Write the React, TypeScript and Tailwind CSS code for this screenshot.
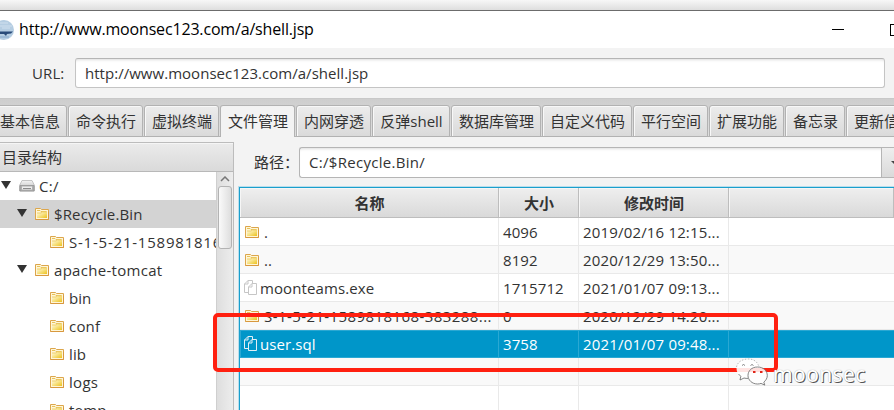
import React from 'react';

const tabs = [
  { label: '基本信息', width: 'w-[76px]' },
  { label: '命令执行', width: 'w-[76px]' },
  { label: '虚拟终端', width: 'w-[76px]' },
  { label: '文件管理', width: 'w-[76px]', active: true },
  { label: '内网穿透', width: 'w-[76px]' },
  { label: '反弹shell', width: 'w-[79px]' },
  { label: '数据库管理', width: 'w-[91px]' },
  { label: '自定义代码', width: 'w-[91px]' },
  { label: '平行空间', width: 'w-[76px]' },
  { label: '扩展功能', width: 'w-[76px]' },
  { label: '备忘录', width: 'w-[61px]' },
  { label: '更新信息', width: 'w-[76px]' },
];

const tree = [
  { label: 'C:/', pad: 'pl-[1px]', open: true, drive: true, text: 'tracking-[0.3px]' },
  { label: '$Recycle.Bin', pad: 'pl-[17px]', open: true, selected: true, text: 'tracking-[0.13px]' },
  { label: 'S-1-5-21-1589818168', pad: 'pl-[50px]', text: 'tracking-[0.78px]' },
  { label: 'apache-tomcat', pad: 'pl-[17px]', open: true, text: 'tracking-[0.3px]' },
  { label: 'bin', pad: 'pl-[50px]', text: '' },
  { label: 'conf', pad: 'pl-[50px]', text: 'tracking-[0.2px]' },
  { label: 'lib', pad: 'pl-[50px]', text: 'tracking-[0.1px]' },
  { label: 'logs', pad: 'pl-[50px]', text: 'tracking-[0.3px]' },
  { label: 'temp', pad: 'pl-[50px]', text: 'tracking-[0.2px]' },
];

const files = [
  { name: '.', size: '4096', date: '2019/02/16 12:15...', folder: true },
  { name: '..', size: '8192', date: '2020/12/29 13:50...', folder: true },
  { name: 'moonteams.exe', size: '1715712', date: '2021/01/07 09:13...' },
  { name: 'S-1-5-21-1589818168-383288...', size: '0', date: '2020/12/29 14:20...', folder: true },
  { name: 'user.sql', size: '3758', date: '2021/01/07 09:48...', selected: true },
  { name: '', size: '', date: '' },
];

function Folder() {
  return (
    <svg width="14" height="12" viewBox="0 0 14 12" className="shrink-0">
      <defs>
        <linearGradient id="folder" x1="0" y1="0" x2="1" y2="1">
          <stop offset="0" stopColor="#fffbe8" />
          <stop offset="0.45" stopColor="#f8e48c" />
          <stop offset="1" stopColor="#ecc21e" />
        </linearGradient>
      </defs>
      <path d="M.5 11.5V.5h5l1 1h7v10z" fill="#fff6d8" stroke="#dca64c" />
      <path d="M2 10V5h4l1.5-1H12v6z" fill="url(#folder)" />
      <path d="M2 2.5h3l1 1h5.5" fill="none" stroke="#e8c258" />
      <path d="M2 5h4l1.5-1H12" fill="none" stroke="#efcf68" />
      <path d="M.5 11.5h13v-8" fill="none" stroke="#d8983e" />
    </svg>
  );
}

function Drive() {
  return (
    <svg width="16" height="12" viewBox="0 0 16 12" className="shrink-0">
      <defs>
        <linearGradient id="drive" x1="0" y1="0" x2="0" y2="1">
          <stop offset="0" stopColor="#f4f4f4" />
          <stop offset="1" stopColor="#b4b4b4" />
        </linearGradient>
      </defs>
      <path d="M3 .5h10l2.500 5v5.500H.5V5.500z" fill="url(#drive)" stroke="#b8b8b8" strokeWidth=".8" />
      <path d="M1 5.500h14V11H1z" fill="#b0b0b0" stroke="#8f8f8f" strokeWidth=".7" />
      <path d="M3 6.500h10v3H3z" fill="#ededed" />
      <path d="M4 8.500h8" stroke="#8a8a8a" />
    </svg>
  );
}

function Pages({ light }: { light?: boolean }) {
  return (
    <svg width="13" height="15" viewBox="0 0 13 15" className="shrink-0" fill="none" stroke={light ? '#e4eff5' : '#c6c6c6'}>
      <path d="M4 12.500H.5V4L4 .5h4.500V3M.5 4H4V.5" />
      <path d="M4.500 14.500V7L8 3.500h4.500v11zM4.500 7H8V3.500" fill={light ? '#0096c9' : '#fff'} />
    </svg>
  );
}

function WeChat() {
  return (
    <svg width="34" height="28" viewBox="0 0 34 28" fill="none" stroke="#666" strokeWidth=".8">
      <path
        d="M13.500 1C6.500 1 1.500 5 1.500 10.500c0 3.300 1.700 6 4.300 7.800L5 22l4-2c1.500.4 2.800.5 4 .4-1.400-5 3-11.400 10.800-11.700C22.500 4 18.500 1 13.500 1z"
        fill="#fff"
        fillOpacity=".88"
        stroke="none"
      />
      <path d="M1.500 9C2.500 4 7 1 13.500 1c5 0 8.500 2.500 10 6.500" stroke="#aaa" strokeDasharray="1.500 1.500" />
      <path d="M3.500 16l2.300 2.300L5 22l4-2c1.500.4 2.800.5 4 .4" />
      <path
        d="M22.500 9C16.500 9 13 13 13 17.500S17 26 22.500 26c1.300 0 2.500-.2 3.500-.6l3.800 1.700-1-3c2-1.500 3.500-4 3.500-6.500C32.300 13 28.500 9 22.500 9z"
        fill="#fff"
        fillOpacity=".86"
      />
      <path d="M7 7.500q1.500-2 3 0M15.500 7.500q1.500-2 3 0" />
      <path d="M18 14h2.500M25 14h2.500" stroke="#e02418" strokeWidth="1.800" />
    </svg>
  );
}

const headCell =
  'flex items-center justify-center border-r border-b border-[#bdbdbd] bg-linear-to-b from-[#efefef] to-[#d9d9d9] pl-px font-bold shadow-[inset_1px_1px_0_#f6f6f6]';

export default function App() {
  return (
    <div className="relative flex h-[410px] w-[894px] flex-col overflow-hidden bg-[#f3f3f3] font-['Open_Sans','Noto_Sans_CJK_SC',sans-serif] text-[15px] leading-5 whitespace-nowrap text-[#333]">
      <div className="h-[11px] shrink-0 border-b border-[#6c6c6c] bg-linear-to-b from-[#f7f7f7] to-[#dedede]" />

      <header className="flex h-[37px] shrink-0 items-center bg-white text-black">
        <svg width="14" height="20" viewBox="0 0 14 20" className="shrink-0">
          <circle cx="4" cy="10" r="10" fill="#b5cde2" />
          <path d="M0 3h8M0 6h12M2 8h8" stroke="#cfdfee" strokeWidth="1.200" />
          <path d="M0 11.500h13l-2 2-4 .5-1 2-2-2H0z" fill="#294b79" />
          <path d="M0 17h9" stroke="#9dbad6" strokeWidth="2" />
        </svg>
        <span className="ml-[5px] pb-px text-[16px] tracking-[-0.17px]">http://www.moonsec123.com/a/shell.jsp</span>
        <div className="mr-[46px] ml-auto h-px w-3 bg-black" />
        <div className="-mr-2 h-3 w-3 shrink-0 border border-black" />
      </header>

      <div className="flex h-[50px] shrink-0 items-center">
        <span className="w-[75px] shrink-0 pl-8 tracking-[0.1px]">URL:</span>
        <div className="flex h-[30px] w-[810px] items-center rounded-[3px] border border-[#c4c4c4] border-t-[#b5b5b5] bg-white pl-[9px] shadow-[inset_0_3px_3px_-2px_#ddd]">
          <span className="tracking-[0.03px]">http://www.moonsec123.com/a/shell.jsp</span>
        </div>
      </div>

      <nav className="flex h-[39px] shrink-0 items-end border-t border-b border-[#b5b5b5] border-t-[#c8c8c8] bg-linear-to-b from-[#cecece] to-[#dedede]">
        <div className="-mb-px -ml-2 flex h-8">
          {tabs.map((tab) => (
            <div key={tab.label} className={`${tab.width} flex shrink-0 pr-px`}>
              <div
                className={`flex flex-1 items-center justify-center rounded-t-[3px] border border-[#b2b2b2] pl-px ${
                  tab.active
                    ? 'border-b-0 bg-[#f3f3f3] pb-px'
                    : 'bg-linear-to-b from-[#ececec] to-[#dadada] shadow-[inset_1px_1px_0_#f8f8f8]'
                }`}
              >
                {tab.label}
              </div>
            </div>
          ))}
        </div>
      </nav>

      <main className="flex min-h-0 flex-1">
        <aside className="mt-[5px] flex w-[234px] shrink-0 flex-col border-t border-r border-[#bcbcbc]">
          <div className="flex h-[29px] shrink-0 items-center border-b border-[#b8b8b8] bg-linear-to-b from-[#ebebeb] to-[#dadada] pb-px pl-[2px] shadow-[inset_0_1px_0_#f5f5f5]">
            目录结构
          </div>
          <div className="flex min-h-0 flex-1">
            <div className="min-w-0 flex-1 overflow-hidden bg-white">
              {tree.map((node) => (
                <div
                  key={node.label}
                  className={`flex h-7 items-center ${node.pad} ${node.selected ? 'bg-[#d3d3d3]' : ''}`}
                >
                  {node.open && (
                    <svg width="10" height="8" viewBox="0 0 10 8" className={`-mt-[3px] shrink-0 ${node.drive ? 'mr-2' : 'mr-2'}`}>
                      <path d="M0 0h10L5 8z" fill="#333" />
                    </svg>
                  )}
                  {node.drive ? <Drive /> : <Folder />}
                  <span className={`${node.drive ? 'ml-1' : 'ml-[5px]'} pb-px ${node.text}`}>{node.label}</span>
                </div>
              ))}
            </div>
            <div className="flex w-[17px] shrink-0 flex-col items-center border-l border-[#cfcfcf] bg-linear-to-r from-[#dedede] to-[#ededed] pt-1">
              <svg width="10" height="6" viewBox="0 0 10 6" fill="none">
                <path d="M1 5l4-4 4 4" stroke="#777" strokeWidth="1.500" />
              </svg>
              <div className="mt-1 h-[63px] w-[14px] rounded-[3px] border border-[#b3b3b3] bg-linear-to-r from-[#fafafa] to-[#dedede]" />
            </div>
          </div>
        </aside>

        <section className="flex min-w-0 flex-1 flex-col pl-[5px]">
          <div className="mt-[10px] flex h-[31px] shrink-0">
            <span className="flex w-[60px] shrink-0 items-center pb-px pl-[15px]">路径：</span>
            <div className="flex min-w-0 flex-1 items-center rounded-l-[3px] border border-r-0 border-[#b5b5b5] bg-white pb-[2px] pl-[9px] tracking-[0.3px] shadow-[inset_0_3px_3px_-2px_#ddd]">
              C:/$Recycle.Bin/
            </div>
            <div className="flex w-[13px] items-center justify-end overflow-hidden border border-r-0 border-[#b5b5b5] bg-linear-to-b from-[#eee] to-[#dadada]">
              <svg width="3" height="4" viewBox="0 0 3 4">
                <path d="M0 0h8L4 4z" fill="#444" />
              </svg>
            </div>
          </div>

          <div className="mt-[9px] flex min-h-0 flex-1 flex-col border-t border-l border-[#1a9fcd] bg-white shadow-[0_0_0_1px_#b9deec]">
            <div className="grid h-[30px] shrink-0 grid-cols-[259px_80px_150px_1fr]">
              <div className={headCell}>名称</div>
              <div className={headCell}>大小</div>
              <div className={headCell}>修改时间</div>
              <div className={headCell} />
            </div>
            {files.map((file, i) => {
              const line = file.selected ? 'border-[#2aa8d3]' : 'border-[#e9e9e9]';
              return (
                <div
                  key={i}
                  className={`grid h-7 shrink-0 grid-cols-[259px_80px_150px_1fr] border-b ${line} ${
                    file.selected
                      ? 'bg-[#0096c9] text-white shadow-[inset_1px_1px_0_#2aa8d3]'
                      : i % 2
                        ? 'bg-[#f9f9f9]'
                        : 'bg-white'
                  }`}
                >
                  <div className={`flex items-center border-r ${line} ${file.folder ? 'pl-[5px]' : 'pl-1'}`}>
                    {file.folder && <Folder />}
                    {!file.folder && file.name && <Pages light={file.selected} />}
                    <span
                      className={`pt-px ${file.folder ? 'ml-[5px]' : 'ml-[3px]'} ${
                        file.name.length > 20 ? 'tracking-[0.42px]' : 'tracking-[0.1px]'
                      }`}
                    >
                      {file.name}
                    </span>
                  </div>
                  <div className={`flex items-center border-r pt-px pl-1 tracking-[0.1px] ${line}`}>{file.size}</div>
                  <div className={`flex items-center border-r pt-px pl-1 tracking-[0.17px] ${line}`}>{file.date}</div>
                  <div />
                </div>
              );
            })}
            <div className="grid flex-1 grid-cols-[259px_80px_150px_1fr]">
              <div className="border-r border-[#e9e9e9]" />
              <div className="border-r border-[#e9e9e9]" />
              <div className="border-r border-[#e9e9e9]" />
            </div>
          </div>
        </section>
      </main>

      <div className="absolute top-[313px] left-[213px] h-[59px] w-[565px] rounded-[5px] border-4 border-[#ff2010]" />
      <div className="absolute top-[357px] left-[735px] flex items-center">
        <WeChat />
        <span className="ml-[4px] pt-[5px] font-['Noto_Sans'] text-[21px] leading-6 tracking-[0.4px] text-white [text-shadow:1px_1px_0_#555,0_0_1px_#999]">
          moonsec
        </span>
      </div>
    </div>
  );
}
